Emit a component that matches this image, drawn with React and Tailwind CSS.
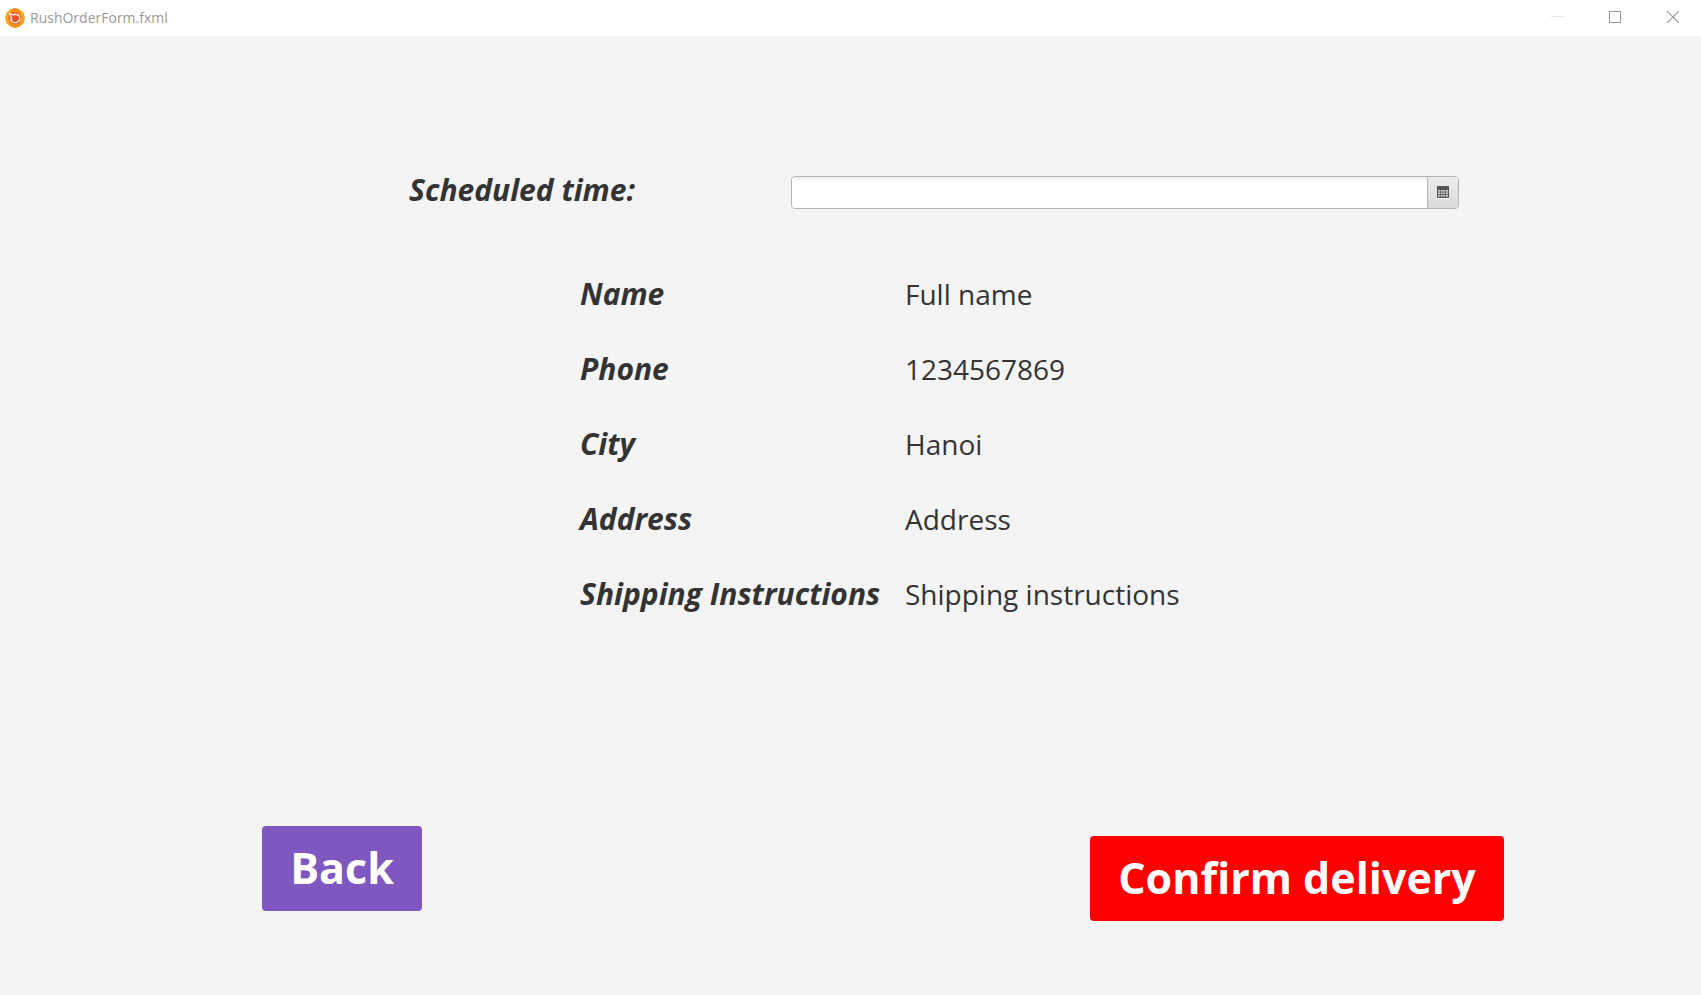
const details = [
  ['Name', 'Full name'],
  ['Phone', '1234567869'],
  ['City', 'Hanoi'],
  ['Address', 'Address'],
  ['Shipping Instructions', 'Shipping instructions'],
];

function AppIcon() {
  return (
    <svg className="h-5 w-5" viewBox="0 0 20 20" aria-hidden="true">
      <path d="M10 0l4.500 1.500L18.500 4.500 20 10l-1.500 5.500-4 3L10 20l-4.500-1.500-4-3L0 10l1.500-5.500 4-3z" fill="#fba61f" />
      <path d="M10 0l4.500 1.500L16 6H4l1.500-4.500zM10 20l4.500-1.500L16 14H4l1.500 4.500z" fill="#f8931d" />
      <circle cx="10" cy="10" r="6.300" fill="#f2622b" />
      <path
        d="M4.300 5.300l4 1.900 1.500-1.100 1.700.9 1.700-.4 1.500 2.400-.2 3.200-3.300 2.600-3.700-.8-2-2.300 1.300-1.200z"
        fill="#ee4f2c"
        stroke="#fff1e4"
        strokeWidth="1.200"
        strokeLinejoin="round"
      />
    </svg>
  );
}

function TitleBar() {
  return (
    <header className="flex h-9 items-center justify-between bg-white pl-[5px]">
      <div className="flex items-center gap-[5px]">
        <AppIcon />
        <h1 className="text-sm text-[#999999]">RushOrderForm.fxml</h1>
      </div>
      <div className="flex h-full gap-0.5 pb-0.5 text-[#999999]">
        <button type="button" aria-label="Minimize" disabled className="flex w-14 items-center justify-center text-[#e5e5e5]">
          <svg className="h-3 w-3" viewBox="0 0 12 12" shapeRendering="crispEdges">
            <path d="M0 5.500h12" stroke="currentColor" />
          </svg>
        </button>
        <button type="button" aria-label="Maximize" className="flex w-14 items-center justify-center">
          <svg className="h-3 w-3" viewBox="0 0 12 12" shapeRendering="crispEdges">
            <rect x=".5" y=".5" width="11" height="11" fill="none" stroke="currentColor" />
          </svg>
        </button>
        <button type="button" aria-label="Close" className="flex w-14 items-center justify-center">
          <svg className="h-3 w-3" viewBox="0 0 12 12">
            <path d="M0 0l12 12M12 0L0 12" stroke="currentColor" strokeWidth="1.200" />
          </svg>
        </button>
      </div>
    </header>
  );
}

function CalendarIcon() {
  return (
    <svg className="h-[13px] w-3" viewBox="0 0 12 13" aria-hidden="true">
      <rect y="1" width="12" height="12" fill="#ffffff" />
      <rect width="12" height="12" fill="#555555" />
      {[4, 6.5, 9].map((y) =>
        [1, 3.7, 6.3, 9].map((x) => <rect key={`${x}-${y}`} x={x} y={y} width="2" height="1.600" fill="#d8d8d8" />)
      )}
    </svg>
  );
}

export default function App() {
  return (
    <div className="flex min-h-screen flex-col bg-[#f4f4f4] font-['Open_Sans','Noto_Sans',sans-serif] text-[#333333]">
      <TitleBar />
      <main className="flex grow flex-col pt-[134px] pb-[74px]">
        <div className="flex items-center pr-[242px] pl-[409px]">
          <label htmlFor="scheduled" className="w-[382px] shrink-0 text-[30px] leading-10 font-bold italic">
            Scheduled time:
          </label>
          <div className="mt-1 flex h-[33px] min-w-0 grow overflow-hidden rounded border border-[#b5b5b5] bg-white">
            <input id="scheduled" type="text" className="min-w-0 grow bg-linear-to-b from-[#eeeeee] to-white to-15% px-2 text-base outline-none" />
            <button
              type="button"
              aria-label="Choose date"
              className="flex w-[31px] shrink-0 items-center justify-center border-l border-[#b5b5b5] bg-linear-to-b from-[#ececec] to-[#dadada]"
            >
              <CalendarIcon />
            </button>
          </div>
        </div>

        <dl className="mt-16 flex flex-col gap-[35px] pl-[580px] leading-10">
          {details.map(([term, value]) => (
            <div key={term} className="flex h-10 items-baseline">
              <dt className="w-[325px] shrink-0 text-[30px] leading-10 font-bold whitespace-nowrap italic">{term}</dt>
              <dd className="text-[28px] leading-10">{value}</dd>
            </div>
          ))}
        </dl>

        <div className="mt-auto flex items-start justify-between pr-[197px] pl-[262px] text-[43px] font-bold text-white">
          <button type="button" className="h-[85px] w-40 rounded bg-[#7e57c0]">
            Back
          </button>
          <button type="button" className="mt-[10px] h-[85px] w-[414px] rounded bg-[#ff0000] whitespace-nowrap">
            Confirm delivery
          </button>
        </div>
      </main>
    </div>
  );
}
